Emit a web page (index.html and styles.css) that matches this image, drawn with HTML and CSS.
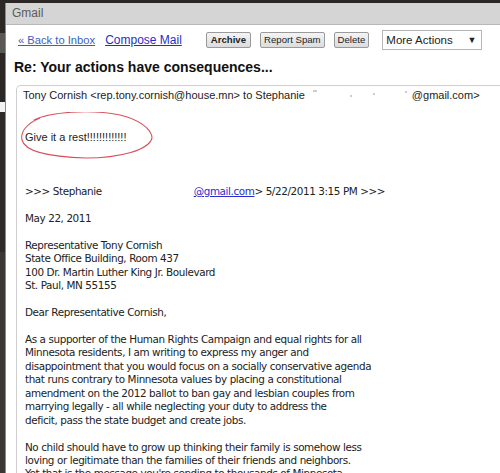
FILE: index.html
```html
<!DOCTYPE html>
<html>
<head>
<meta charset="utf-8">
<link rel="stylesheet" href="styles.css">
</head>
<body>
<div class="page">
  <div class="strip">
    <div class="s1"></div>
    <div class="s2"></div>
    <div class="s3"></div>
    <div class="s4"></div>
    <div class="s5"></div>
    <div class="s6"></div>
  </div>
  <div class="window">
    <div class="titlebar">Gmail</div>
    <div class="toolbar">
      <a class="link back" href="#">« Back to Inbox</a>
      <a class="link compose" href="#">Compose Mail</a>
      <span class="btn bold">Archive</span>
      <span class="btn">Report Spam</span>
      <span class="btn">Delete</span>
      <span class="select"><span>More Actions</span><span class="arrow">▼</span></span>
    </div>
    <h1 class="subject">Re: Your actions have consequences...</h1>
    <div class="message">
      <div class="header">
        <span>Tony Cornish &lt;rep.tony.cornish@house.mn&gt; to Stephanie</span>
        <span class="redact"><i></i><i></i><i></i><i></i></span>
        <span>@gmail.com&gt;</span>
      </div>
      <div class="reply">
        <span class="rest">Give it a rest!!!!!!!!!!!!!</span>
        <svg class="circle" width="136" height="48" viewBox="0 0 136 48">
          <path d="M14 8 C30 0, 70 -3, 100 3 C118 7, 132 17, 132 26 C129 38, 100 46, 66 46 C32 45, 5 40, 2 28 C0 19, 8 11, 20 6" fill="none" stroke="#d8505c" stroke-width="1.1"/>
        </svg>
      </div>
      <div class="body">
        <p class="quote"><span>&gt;&gt;&gt; Stephanie</span><span class="gap"></span><a href="#" class="mail">@gmail.com</a>&gt; 5/22/2011 3:15 PM &gt;&gt;&gt;</p>
        <p>May 22, 2011</p>
        <p>Representative Tony Cornish<br>State Office Building, Room 437<br>100 Dr. Martin Luther King Jr. Boulevard<br>St. Paul, MN 55155</p>
        <p>Dear Representative Cornish,</p>
        <p>As a supporter of the Human Rights Campaign and equal rights for all<br>Minnesota residents, I am writing to express my anger and<br>disappointment that you would focus on a socially conservative agenda<br>that runs contrary to Minnesota values by placing a constitutional<br>amendment on the 2012 ballot to ban gay and lesbian couples from<br>marrying legally - all while neglecting your duty to address the<br>deficit, pass the state budget and create jobs.</p>
        <p>No child should have to grow up thinking their family is somehow less<br>loving or legitimate than the families of their friends and neighbors.<br>Yet that is the message you're sending to thousands of Minnesota</p>
      </div>
    </div>
  </div>
</div>
</body>
</html>
```
FILE: styles.css
```css
html, body {
  margin: 0;
  padding: 0;
  height: 473px;
  overflow: hidden;
  background: #2a2725;
}
.page {
  display: flex;
  height: 473px;
  border-top: 3px solid #2a2725;
  box-sizing: border-box;
}
.strip {
  width: 5px;
  flex-shrink: 0;
  display: flex;
  flex-direction: column;
}
.s1 { height: 30px; background: #2a2725; }
.s2 { height: 20px; background: #5a5856; }
.s3 { height: 49px; background: #2a2725; }
.s4 { height: 10px; background: #f2f2f2; }
.s5 { height: 140px; background: #2e2b29; }
.s6 { flex: 1; background: #3a3836; }
.window {
  flex: 1;
  min-width: 0;
  background: #fff;
  border-left: 1px solid #8a8a8a;
  font-family: "Liberation Sans", Arial, sans-serif;
  overflow: hidden;
  white-space: nowrap;
}
.titlebar {
  height: 21px;
  line-height: 20px;
  background: #d5d5d5;
  border-bottom: 1px solid #b8b8b8;
  color: #5b5b5b;
  font-size: 12px;
  padding-left: 6px;
}
.toolbar {
  display: flex;
  align-items: center;
  height: 24px;
  margin-top: 3px;
  padding-left: 12px;
}
.toolbar > * { flex-shrink: 0; }
.link {
  text-decoration: underline;
}
.back {
  color: #3a5fc0;
  font-size: 11.2px;
}
.compose {
  margin-left: 10px;
  color: #1f2fc8;
  font-size: 12px;
}
.btn {
  font-size: 9.6px;
  color: #222;
  background: linear-gradient(#f4f4f4, #dcdcdc);
  border: 1px solid #9a9a9a;
  border-radius: 2px;
  padding: 1px 3px;
  line-height: 12px;
  margin-left: 9px;
}
.compose + .btn { margin-left: 24px; }
.bold { font-weight: bold; padding: 1px 4px; }
.select {
  display: flex;
  justify-content: space-between;
  align-items: center;
  width: 90px;
  height: 18px;
  margin-left: 13px;
  padding: 0 5px 0 3px;
  border: 1px solid #b5b5b5;
  font-size: 11.5px;
  color: #222;
}
.arrow { font-size: 9px; }
.subject {
  font-size: 14px;
  font-weight: bold;
  margin: 5px 0 0 8px;
  height: 20px;
  line-height: 20px;
  color: #111;
}
.message {
  margin: 8px 0 0 10px;
  border: 1px solid #cfcfcf;
  border-right: none;
  border-bottom: none;
  border-top-left-radius: 5px;
  height: 400px;
  padding-left: 6px;
}
.header {
  display: flex;
  font-size: 11px;
  color: #222;
  padding-top: 1px;
  height: 16px;
  line-height: 16px;
}
.header > span { flex-shrink: 0; }
.redact {
  width: 107px;
  position: relative;
}
.redact i {
  position: absolute;
  width: 2px;
  height: 2px;
  background: #ccc;
}
.redact i:nth-child(1) { left: 8px; top: 3px; width: 4px; }
.redact i:nth-child(2) { left: 45px; top: 8px; }
.redact i:nth-child(3) { left: 68px; top: 6px; }
.redact i:nth-child(4) { left: 100px; top: 4px; }
.reply {
  position: relative;
  margin-top: 26px;
  height: 16px;
  font-size: 11px;
  color: #222;
  padding-left: 2px;
  line-height: 16px;
}
.circle {
  position: absolute;
  left: -3px;
  top: -17px;
}
.body {
  margin-top: 40px;
  padding-left: 2px;
  font-family: "DejaVu Sans", Verdana, sans-serif;
  font-size: 10.4px;
  line-height: 13.45px;
  color: #222;
  letter-spacing: -0.4px;
}
.body p {
  margin: 0 0 13.45px 0;
}
.quote { display: flex; }
.gap { width: 92px; flex-shrink: 0; }
.mail { color: #2a2ad0; text-decoration: underline; }
```
